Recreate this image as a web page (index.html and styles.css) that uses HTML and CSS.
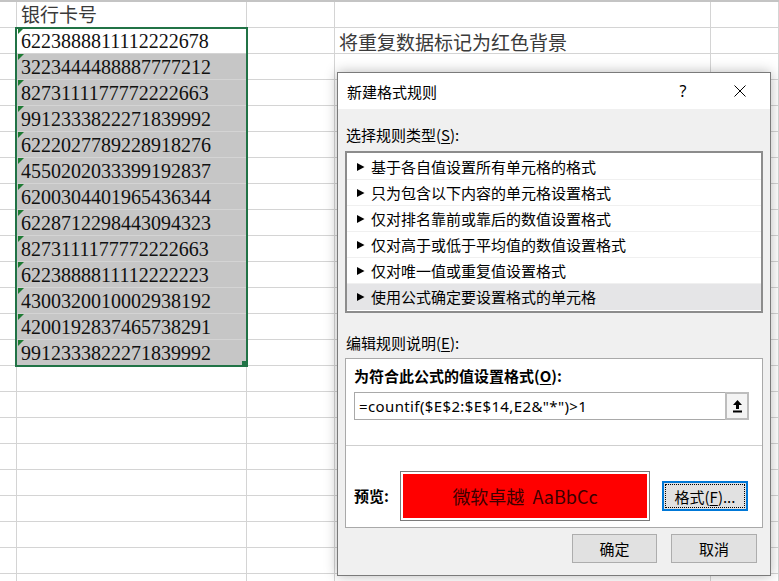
FILE: index.html
```html
<!DOCTYPE html>
<html lang="zh-CN">
<head>
<meta charset="utf-8">
<title>新建格式规则</title>
<link rel="stylesheet" href="styles.css">
</head>
<body>
<div class="sheet">
  <div class="row"><div class="c"></div><div class="c txt title">银行卡号</div><div class="c"></div><div class="c"></div><div class="c"></div></div>
  <div class="row"><div class="c"></div><div class="c num"><i class="tri"></i>6223888811112222678</div><div class="c"></div><div class="c txt note">将重复数据标记为红色背景</div><div class="c"></div></div>
  <div class="row"><div class="c"></div><div class="c num sel"><i class="tri"></i>3223444488887777212</div><div class="c"></div><div class="c"></div><div class="c"></div></div>
  <div class="row"><div class="c"></div><div class="c num sel"><i class="tri"></i>8273111177772222663</div><div class="c"></div><div class="c"></div><div class="c"></div></div>
  <div class="row"><div class="c"></div><div class="c num sel"><i class="tri"></i>9912333822271839992</div><div class="c"></div><div class="c"></div><div class="c"></div></div>
  <div class="row"><div class="c"></div><div class="c num sel"><i class="tri"></i>6222027789228918276</div><div class="c"></div><div class="c"></div><div class="c"></div></div>
  <div class="row"><div class="c"></div><div class="c num sel"><i class="tri"></i>4550202033399192837</div><div class="c"></div><div class="c"></div><div class="c"></div></div>
  <div class="row"><div class="c"></div><div class="c num sel"><i class="tri"></i>6200304401965436344</div><div class="c"></div><div class="c"></div><div class="c"></div></div>
  <div class="row"><div class="c"></div><div class="c num sel"><i class="tri"></i>6228712298443094323</div><div class="c"></div><div class="c"></div><div class="c"></div></div>
  <div class="row"><div class="c"></div><div class="c num sel"><i class="tri"></i>8273111177772222663</div><div class="c"></div><div class="c"></div><div class="c"></div></div>
  <div class="row"><div class="c"></div><div class="c num sel"><i class="tri"></i>6223888811112222223</div><div class="c"></div><div class="c"></div><div class="c"></div></div>
  <div class="row"><div class="c"></div><div class="c num sel"><i class="tri"></i>4300320010002938192</div><div class="c"></div><div class="c"></div><div class="c"></div></div>
  <div class="row"><div class="c"></div><div class="c num sel"><i class="tri"></i>4200192837465738291</div><div class="c"></div><div class="c"></div><div class="c"></div></div>
  <div class="row"><div class="c"></div><div class="c num sel"><i class="tri"></i>9912333822271839992</div><div class="c"></div><div class="c"></div><div class="c"></div></div>
  <div class="row"><div class="c"></div><div class="c"></div><div class="c"></div><div class="c"></div><div class="c"></div></div>
  <div class="row"><div class="c"></div><div class="c"></div><div class="c"></div><div class="c"></div><div class="c"></div></div>
  <div class="row"><div class="c"></div><div class="c"></div><div class="c"></div><div class="c"></div><div class="c"></div></div>
  <div class="row"><div class="c"></div><div class="c"></div><div class="c"></div><div class="c"></div><div class="c"></div></div>
  <div class="row"><div class="c"></div><div class="c"></div><div class="c"></div><div class="c"></div><div class="c"></div></div>
  <div class="row"><div class="c"></div><div class="c"></div><div class="c"></div><div class="c"></div><div class="c"></div></div>
  <div class="row"><div class="c"></div><div class="c"></div><div class="c"></div><div class="c"></div><div class="c"></div></div>
  <div class="row"><div class="c"></div><div class="c"></div><div class="c"></div><div class="c"></div><div class="c"></div></div>
  <div class="row"><div class="c"></div><div class="c"></div><div class="c"></div><div class="c"></div><div class="c"></div></div>
  <div class="selection"><span class="handle"></span></div>
</div>

<div class="dialog">
  <div class="titlebar">
    <span class="dtitle">新建格式规则</span>
    <span class="help">?</span>
    <svg class="close" width="12" height="12" viewBox="0 0 12 12"><path d="M0.5 0.5 L11.5 11.5 M11.5 0.5 L0.5 11.5" stroke="#000" stroke-width="1" fill="none"/></svg>
  </div>
  <div class="dbody">
    <div class="label l1">选择规则类型(<u>S</u>):</div>
    <div class="listbox">
      <div class="item"><svg class="arrow" width="8" height="8" viewBox="0 0 8 8"><polygon points="0,0 7.5,4 0,8" fill="#000"/></svg>基于各自值设置所有单元格的格式</div>
      <div class="item"><svg class="arrow" width="8" height="8" viewBox="0 0 8 8"><polygon points="0,0 7.5,4 0,8" fill="#000"/></svg>只为包含以下内容的单元格设置格式</div>
      <div class="item"><svg class="arrow" width="8" height="8" viewBox="0 0 8 8"><polygon points="0,0 7.5,4 0,8" fill="#000"/></svg>仅对排名靠前或靠后的数值设置格式</div>
      <div class="item"><svg class="arrow" width="8" height="8" viewBox="0 0 8 8"><polygon points="0,0 7.5,4 0,8" fill="#000"/></svg>仅对高于或低于平均值的数值设置格式</div>
      <div class="item"><svg class="arrow" width="8" height="8" viewBox="0 0 8 8"><polygon points="0,0 7.5,4 0,8" fill="#000"/></svg>仅对唯一值或重复值设置格式</div>
      <div class="item selected"><svg class="arrow" width="8" height="8" viewBox="0 0 8 8"><polygon points="0,0 7.5,4 0,8" fill="#000"/></svg>使用公式确定要设置格式的单元格</div>
    </div>
    <div class="label l2">编辑规则说明(<u>E</u>):</div>
    <div class="editbox">
      <div class="upper">
        <div class="blabel">为符合此公式的值设置格式(<u>O</u>):</div>
        <div class="formula">
          <span class="ftext">=countif($E$2:$E$14,E2&amp;"*")&gt;1</span>
          <span class="fbtn"><svg width="9" height="13" viewBox="0 0 9 13"><polygon points="4.5,0 9,5 6,5 6,9 3,9 3,5 0,5" fill="#000"/><rect x="0" y="10.5" width="9" height="2" fill="#000"/></svg></span>
        </div>
      </div>
      <div class="lower">
        <span class="blabel plabel">预览:</span>
        <div class="preview"><div class="red">微软卓越&nbsp;&nbsp;AaBbCc</div></div>
        <div class="btn fmt">格式(<u>F</u>)...</div>
      </div>
    </div>
    <div class="actions">
      <div class="btn ok">确定</div>
      <div class="btn cancel">取消</div>
    </div>
  </div>
</div>
</body>
</html>
```

FILE: styles.css
```css
html, body {
  margin: 0;
  padding: 0;
  width: 779px;
  height: 581px;
  overflow: hidden;
  background: #fff;
}
body {
  font-family: "Liberation Serif", "Noto Sans CJK SC", serif;
  position: relative;
}
.sheet {
  position: relative;
  border-top: 2px solid #c4c4c4;
}
.row {
  display: grid;
  grid-template-columns: 17px 230px 88px 376px 68px;
  height: 26px;
}
.c {
  box-sizing: border-box;
  border-right: 1px solid #d4d4d4;
  border-bottom: 1px solid #d4d4d4;
  height: 26px;
  position: relative;
  white-space: nowrap;
  overflow: visible;
}
.txt {
  font-family: "Noto Sans CJK SC", sans-serif;
  font-size: 19px;
  line-height: 24px;
  color: #3a3a3a;
  padding-left: 4px;
}
.note {
  padding-left: 4px;
  line-height: 27px;
}
.num {
  font-family: "Liberation Serif", serif;
  font-size: 20px;
  line-height: 27px;
  color: #111;
  padding-left: 4px;
}
.sel {
  background: #c6c6c6;
}
.tri {
  position: absolute;
  left: 1px;
  top: 0;
  width: 0;
  height: 0;
  border-top: 6px solid #1e7b34;
  border-right: 6px solid transparent;
}
.selection {
  position: absolute;
  left: 15px;
  top: 25px;
  width: 233px;
  height: 340px;
  box-sizing: border-box;
  border: 2px solid #217346;
  pointer-events: none;
}
.handle {
  position: absolute;
  right: -1px;
  bottom: -1px;
  width: 5px;
  height: 5px;
  background: #217346;
}

/* dialog */
.dialog {
  position: absolute;
  left: 337px;
  top: 72px;
  width: 434px;
  box-sizing: border-box;
  border: 1px solid #7a7a7a;
  background: #f0f0f0;
  box-shadow: 0 0 12px rgba(0, 0, 0, 0.28);
  font-family: "Noto Sans CJK SC", sans-serif;
  font-size: 15px;
  color: #000;
}
.titlebar {
  height: 36px;
  background: #fff;
  display: flex;
  align-items: center;
  padding-left: 9px;
}
.dtitle {
  flex: 1;
  font-size: 15px;
}
.help {
  width: 16px;
  text-align: center;
  font-size: 16px;
  font-family: "Noto Sans", sans-serif;
  margin-right: 43px;
}
.close {
  margin-right: 24px;
}
.dbody {
  padding: 15px 7px 12px 7px;
}
.label {
  height: 22px;
  line-height: 22px;
  padding-left: 1px;
}
.l1 { margin-bottom: 5px; }
.l2 { margin-top: 19px; margin-bottom: 4px; }
u { text-decoration: underline; text-underline-offset: 2px; }
.listbox {
  border: 2px solid #8c8c8c;
  background: #fff;
  padding-top: 1px;
  height: 157px;
  box-sizing: content-box;
}
.item {
  height: 26px;
  box-sizing: border-box;
  border-bottom: 1px solid #f0f0f0;
  display: flex;
  align-items: center;
  padding-left: 10px;
  line-height: 24px;
}
.item.selected {
  background: #e5e5e7;
  border-bottom: none;
}
.arrow {
  margin-right: 6px;
  flex: none;
}
.editbox {
  border: 1px solid #a9a9a9;
  background: #fff;
  height: 170px;
  box-sizing: border-box;
}
.upper {
  height: 87px;
  box-sizing: border-box;
  border-bottom: 1px solid #cfcfcf;
  padding: 6px 13px 0 8px;
}
.blabel {
  font-weight: bold;
  height: 22px;
  line-height: 22px;
}
.formula {
  margin-top: 5px;
  height: 28px;
  box-sizing: border-box;
  border: 1px solid #a9a9a9;
  display: flex;
  align-items: stretch;
}
.ftext {
  flex: 1;
  padding-left: 4px;
  font-family: "Noto Sans", sans-serif;
  font-size: 15px;
  letter-spacing: 0.38px;
  line-height: 26px;
}
.fbtn {
  width: 24px;
  box-sizing: border-box;
  border: 2px solid #bdbdbd;
  margin: -1px -1px -1px 0;
  background: #f4f4f4;
  display: flex;
  align-items: center;
  justify-content: center;
}
.lower {
  display: flex;
  align-items: center;
  padding: 25px 0 0 8px;
}
.plabel {
  width: 46px;
}
.preview {
  width: 250px;
  height: 50px;
  box-sizing: border-box;
  border: 1px solid #7a7a7a;
  padding: 2px;
  background: #fff;
}
.red {
  background: #ff0000;
  height: 100%;
  display: flex;
  align-items: center;
  justify-content: center;
  font-size: 18px;
  color: #3c0000;
}
.btn {
  box-sizing: border-box;
  background: #e1e1e1;
  border: 1px solid #adadad;
  display: flex;
  align-items: center;
  justify-content: center;
  font-size: 15px;
}
.fmt {
  margin-left: 12px;
  width: 86px;
  height: 30px;
  border: 2px solid #0078d7;
  outline: 1px dotted #000;
  outline-offset: -4px;
}
.actions {
  display: flex;
  justify-content: flex-end;
  gap: 14px;
  margin-top: 6px;
  padding-right: 6px;
}
.ok { width: 85px; height: 29px; }
.cancel { width: 86px; height: 29px; }
```
